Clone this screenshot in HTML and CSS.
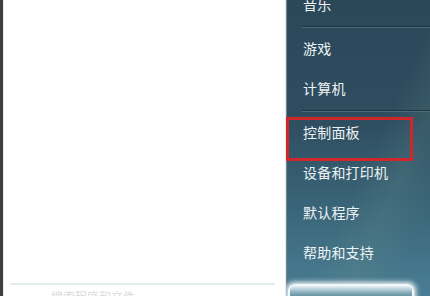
FILE: index.html
```html
<!DOCTYPE html>
<html>
<head>
<meta charset="utf-8">
<link rel="stylesheet" href="styles.css">
</head>
<body>
<div class="menu">
  <div class="left">
    <div class="programs"></div>
    <div class="divider"></div>
    <div class="search">搜索程序和文件</div>
  </div>
  <div class="right">
    <ul class="links">
      <li class="item">音乐</li>
      <li class="sep"></li>
      <li class="item">游戏</li>
      <li class="item">计算机</li>
      <li class="sep"></li>
      <li class="item">控制面板</li>
      <li class="item">设备和打印机</li>
      <li class="item">默认程序</li>
      <li class="item">帮助和支持</li>
    </ul>
    <div class="shutdown"></div>
    <div class="highlight"></div>
  </div>
</div>
</body>
</html>
```
FILE: styles.css
```css
* { box-sizing: border-box; }
html, body { margin: 0; padding: 0; }
body {
  width: 430px;
  height: 296px;
  overflow: hidden;
  font-family: "Noto Sans CJK SC", "Liberation Sans", sans-serif;
  background: #ffffff;
}
.menu {
  display: flex;
  width: 430px;
  height: 296px;
}
.left {
  width: 286px;
  height: 296px;
  background: #ffffff;
  border-left: 3px solid #3f3f3f;
  border-right: 1px solid #e6eaec;
  display: flex;
  flex-direction: column;
  box-shadow: inset 1px 0 0 #e9ecee;
}
.programs { flex: 1; }
.divider {
  height: 2px;
  margin: 0 10px 0 7px;
  background: #e3ebea;
}
.search {
  height: 11px;
  padding-left: 48px;
  padding-top: 5px;
  font-size: 12px;
  line-height: 14px;
  color: #dadada;
  overflow: hidden;
}
.right {
  position: relative;
  flex: 1;
  height: 296px;
  overflow: hidden;
  background:
    linear-gradient(115deg, rgba(0,0,0,0) 55%, rgba(110,150,140,0.18) 70%, rgba(0,0,0,0) 85%),
    linear-gradient(180deg, #2b4859 0%, #2e4d5f 40%, #3a6578 70%, #4a7e94 100%);
  box-shadow: inset 1px 0 0 #6e8894;
}
.links {
  list-style: none;
  margin: -16px 0 0 0;
  padding: 0;
}
.item {
  height: 40px;
  padding-left: 17px;
  font-size: 14px;
  line-height: 40px;
  color: #eef3f5;
  letter-spacing: 0.2px;
}
.sep {
  height: 4px;
  margin-left: 16px;
  border-top: 2px solid transparent;
}
.sep::after {
  content: "";
  display: block;
  height: 1px;
  background: #1f3645;
  box-shadow: 0 1px 0 #4d6a78;
}
.shutdown {
  position: absolute;
  left: 2px;
  top: 284px;
  width: 126px;
  height: 20px;
  border: 2px solid #f2f8fa;
  border-radius: 6px 6px 0 0;
  background: linear-gradient(180deg, #e6f2f5 0%, #7fa7b6 45%, #3c6a7e 100%);
  box-shadow: 0 0 5px 2px rgba(255,255,255,0.9);
}
.highlight {
  position: absolute;
  left: 0;
  top: 117px;
  width: 127px;
  height: 44px;
  border: 3px solid #d1262b;
}
```
